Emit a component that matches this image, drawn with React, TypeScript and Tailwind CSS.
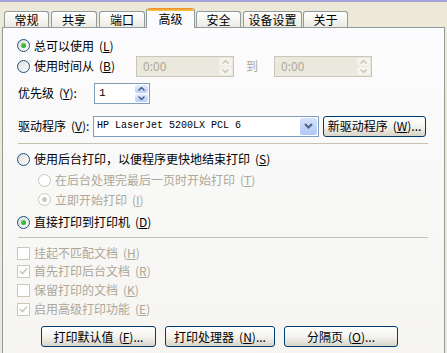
import type { ReactNode } from "react";

function Radio({ checked = false, disabled = false }: { checked?: boolean; disabled?: boolean }) {
  return (
    <span
      className={`flex h-[13px] w-[13px] shrink-0 items-center justify-center rounded-full border ${
        disabled ? "border-[#cac8bb] bg-white" : "border-[#1c5180] bg-gradient-to-br from-[#dcdcd7] to-white"
      }`}
    >
      {checked ? (
        <span
          className={`h-[5px] w-[5px] rounded-full ${
            disabled ? "bg-[#cac8bb]" : "bg-gradient-to-br from-[#55d551] to-[#21a121]"
          }`}
        />
      ) : null}
    </span>
  );
}

function Check({ checked = false }: { checked?: boolean }) {
  return (
    <span className="flex h-[13px] w-[13px] shrink-0 items-center justify-center border border-[#cac8bb] bg-white">
      {checked ? (
        <svg width="9" height="9" viewBox="0 0 9 9">
          <path d="M1 4 L3.5 6.5 L8 1.5" fill="none" stroke="#cac8bb" strokeWidth="1.6" />
        </svg>
      ) : null}
    </span>
  );
}

// mnemonic: " (X)" with the letter underlined
function Key({ k }: { k: string }) {
  return (
    <span className="ml-[5px]">
      (<span className="underline underline-offset-1">{k}</span>)
    </span>
  );
}

function XpButton({ children, className = "" }: { children: ReactNode; className?: string }) {
  return (
    <button
      type="button"
      className={`flex h-[21px] items-center justify-center rounded-[3px] border border-[#003c74] bg-gradient-to-b from-white via-[#f4f3ee] to-[#d8d4c8] text-[12px] text-black ${className}`}
    >
      {children}
    </button>
  );
}

function SpinArrows({ disabled = false }: { disabled?: boolean }) {
  const arrow = disabled ? "#cac8bb" : "#4d6185";
  return (
    <div className="flex w-[15px] shrink-0 flex-col gap-px p-px">
      <div
        className={`flex flex-1 items-center justify-center rounded-[2px] ${
          disabled ? "bg-[#f4f3ee]" : "bg-gradient-to-b from-[#e4ecfd] to-[#b9cdf7]"
        }`}
      >
        <svg width="7" height="4" viewBox="0 0 7 4">
          <path d="M0.5 3.5 L3.5 0.5 L6.5 3.5" fill="none" stroke={arrow} strokeWidth="1.5" />
        </svg>
      </div>
      <div
        className={`flex flex-1 items-center justify-center rounded-[2px] ${
          disabled ? "bg-[#f4f3ee]" : "bg-gradient-to-b from-[#e4ecfd] to-[#b9cdf7]"
        }`}
      >
        <svg width="7" height="4" viewBox="0 0 7 4">
          <path d="M0.5 0.5 L3.5 3.5 L6.5 0.5" fill="none" stroke={arrow} strokeWidth="1.5" />
        </svg>
      </div>
    </div>
  );
}

const tabs = [
  { label: "常规", cls: "ml-[4px] w-[45px]" },
  { label: "共享", cls: "ml-[2px] w-[46px]" },
  { label: "端口", cls: "ml-[2px] w-[46px]" },
  { label: "高级", cls: "ml-[1px] w-[49px]", active: true },
  { label: "安全", cls: "ml-[1px] w-[45px]" },
  { label: "设备设置", cls: "ml-[2px] w-[59px]" },
  { label: "关于", cls: "ml-[1px] w-[45px]" },
];

export default function App() {
  return (
    <div className="h-[353px] w-[447px] overflow-hidden bg-[#ece9d8] font-['Noto_Sans_CJK_SC',sans-serif] text-[12px] leading-none text-black">
      <div className="h-[2px] bg-[#a3a3de]" />

      {/* tabs */}
      <div className="relative z-10 -mb-px flex h-[26px] items-end">
        {tabs.map((t) =>
          t.active ? (
            <div
              key={t.label}
              className={`${t.cls} flex h-[20px] flex-col rounded-t-[3px] border-x border-[#919b9c] bg-[#fcfcfe]`}
            >
              <div className="h-[3px] rounded-t-[3px] bg-gradient-to-b from-[#e68b2c] to-[#ffc73c]" />
              <div className="flex flex-1 items-center justify-center pb-[2px]">{t.label}</div>
            </div>
          ) : (
            <div
              key={t.label}
              className={`${t.cls} mb-px flex h-[16px] items-center justify-center rounded-t-[3px] border-x border-t border-[#919b9c] bg-gradient-to-b from-white to-[#ecebe5]`}
            >
              {t.label}
            </div>
          )
        )}
      </div>

      {/* pane */}
      <div className="ml-[2px] flex h-[400px] w-[443px] flex-col border border-[#919b9c] bg-gradient-to-b from-[#fcfcfe] to-[#f4f3ee] pl-[14px]">
        <div className="mt-[8px] flex h-[19px] items-center gap-[4px]">
          <Radio checked />
          <span>
            总可以使用
            <Key k="L" />
          </span>
        </div>

        <div className="flex h-[22px] items-center">
          <div className="flex w-[119px] items-center gap-[4px]">
            <Radio />
            <span>
              使用时间从
              <Key k="B" />
            </span>
          </div>
          <div className="flex h-[21px] w-[98px] border border-[#c9c7ba] bg-[#ebe9dd]">
            <div className="flex flex-1 items-center pl-[6px] text-[#aca899]">0:00</div>
            <SpinArrows disabled />
          </div>
          <span className="ml-[12px] w-[28px] text-[#aca899]">到</span>
          <div className="flex h-[21px] w-[98px] border border-[#c9c7ba] bg-[#ebe9dd]">
            <div className="flex flex-1 items-center pl-[6px] text-[#aca899]">0:00</div>
            <SpinArrows disabled />
          </div>
        </div>

        <div className="mt-[5px] flex h-[22px] items-center">
          <span className="w-[77px] pl-[1px]">
            优先级
            <Key k="Y" />:
          </span>
          <div className="flex h-[21px] w-[56px] border border-[#7f9db9] bg-white">
            <div className="flex flex-1 items-center pl-[4px] font-['Liberation_Mono',monospace] text-[11px]">1</div>
            <SpinArrows />
          </div>
        </div>

        <div className="mt-[11px] flex h-[22px] items-center">
          <span className="w-[76px] pl-[1px]">
            驱动程序
            <Key k="V" />:
          </span>
          <div className="flex h-[21px] w-[226px] border border-[#7f9db9] bg-white">
            <div className="flex flex-1 items-center pl-[3px] font-['Liberation_Mono',monospace] text-[10px]">
              HP LaserJet 5200LX PCL 6
            </div>
            <div className="m-px flex w-[17px] items-center justify-center rounded-[2px] bg-gradient-to-b from-[#d6e2fd] to-[#b2c7f6]">
              <svg width="9" height="6" viewBox="0 0 9 6">
                <path d="M1 1 L4.5 4.5 L8 1" fill="none" stroke="#4d6185" strokeWidth="2" />
              </svg>
            </div>
          </div>
          <XpButton className="ml-[4px] w-[103px]">
            新驱动程序
            <Key k="W" />
            ...
          </XpButton>
        </div>

        <div className="mt-[6px] mr-[16px] ml-[1px] h-px bg-[#c5c2b2]" />

        <div className="mt-[5px] flex h-[20px] items-center gap-[4px]">
          <Radio />
          <span>
            使用后台打印，以便程序更快地结束打印
            <Key k="S" />
          </span>
        </div>
        <div className="mt-[1px] flex h-[20px] items-center gap-[4px] pl-[21px] text-[#aca899]">
          <Radio disabled />
          <span>
            在后台处理完最后一页时开始打印
            <Key k="T" />
          </span>
        </div>
        <div className="flex h-[19px] items-center gap-[4px] pl-[21px] text-[#aca899]">
          <Radio checked disabled />
          <span>
            立即开始打印
            <Key k="I" />
          </span>
        </div>
        <div className="mt-[3px] flex h-[20px] items-center gap-[4px]">
          <Radio checked />
          <span>
            直接打印到打印机
            <Key k="D" />
          </span>
        </div>

        <div className="mt-[5px] mr-[16px] ml-[1px] h-px bg-[#c5c2b2]" />

        <div className="mt-[6px] flex h-[18px] items-center gap-[4px] text-[#aca899]">
          <Check />
          <span>
            挂起不匹配文档
            <Key k="H" />
          </span>
        </div>
        <div className="flex h-[18px] items-center gap-[4px] text-[#aca899]">
          <Check checked />
          <span>
            首先打印后台文档
            <Key k="R" />
          </span>
        </div>
        <div className="mt-[1px] flex h-[18px] items-center gap-[4px] text-[#aca899]">
          <Check />
          <span>
            保留打印的文档
            <Key k="K" />
          </span>
        </div>
        <div className="mt-[1px] flex h-[18px] items-center gap-[4px] text-[#aca899]">
          <Check checked />
          <span>
            启用高级打印功能
            <Key k="E" />
          </span>
        </div>

        <div className="mt-[8px] flex items-center gap-[9px] pl-[24px]">
          <XpButton className="w-[115px]">
            打印默认值
            <Key k="F" />
            ...
          </XpButton>
          <XpButton className="w-[110px]">
            打印处理器
            <Key k="N" />
            ...
          </XpButton>
          <XpButton className="w-[114px]">
            分隔页
            <Key k="O" />
            ...
          </XpButton>
        </div>
      </div>
    </div>
  );
}
